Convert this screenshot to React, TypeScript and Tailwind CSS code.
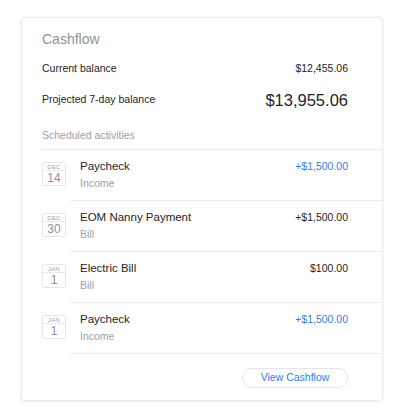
import React from 'react';

type Activity = {
  month: string;
  day: string;
  title: string;
  kind: string;
  amount: string;
  credit: boolean;
};

const activities: Activity[] = [
  { month: 'DEC', day: '14', title: 'Paycheck', kind: 'Income', amount: '+$1,500.00', credit: true },
  { month: 'DEC', day: '30', title: 'EOM Nanny Payment', kind: 'Bill', amount: '+$1,500.00', credit: false },
  { month: 'JAN', day: '1', title: 'Electric Bill', kind: 'Bill', amount: '$100.00', credit: false },
  { month: 'JAN', day: '1', title: 'Paycheck', kind: 'Income', amount: '+$1,500.00', credit: true },
];

function DateBadge({ month, day }: { month: string; day: string }) {
  return (
    <div className="mt-[3px] flex h-[24px] w-[24px] flex-col rounded-[2px] border border-[#e4e6e8] bg-white">
      <div className="flex h-[8px] items-center justify-center border-b border-[#e8eaec] text-[6px] leading-none tracking-[0.2px] text-[#9ea3a8]">
        {month}
      </div>
      <div className="flex flex-1 items-center justify-center text-[12px] leading-none text-[#8b9197]">{day}</div>
    </div>
  );
}

function ActivityRow({ item }: { item: Activity }) {
  return (
    <div className="flex">
      <div className="w-[28px] shrink-0 pt-[9px]">
        <DateBadge month={item.month} day={item.day} />
      </div>
      <div className="flex h-[51px] flex-1 justify-between border-b border-[#ececec] pl-[10px] pr-[34px] pt-[9px]">
        <div className="flex flex-col">
          <span className="h-[14px] text-[11.5px] leading-[14px] text-[#1f2326]">{item.title}</span>
          <span className="mt-[3px] h-[14px] text-[10.5px] leading-[14px] text-[#9aa1a8]">{item.kind}</span>
        </div>
        <span
          className={`h-[14px] text-[10.5px] leading-[14px] ${item.credit ? 'text-[#2a7ff0]' : 'text-[#1f2326]'}`}
        >
          {item.amount}
        </span>
      </div>
    </div>
  );
}

export default function App() {
  return (
    <div
      className="h-[416px] w-[404px] bg-white pl-[21px] pt-[17px]"
      style={{ fontFamily: '"Liberation Sans", Arial, sans-serif' }}
    >
      <div className="flex h-[384px] w-[362px] flex-col rounded-[4px] border border-[#e9eaeb] bg-white pl-[20px] shadow-[0_1px_4px_rgba(0,0,0,0.06)]">
        <div className="mt-[12px] h-[18px] text-[14px] leading-[18px] text-[#8c949c]">Cashflow</div>

        <div className="mt-[12px] flex h-[18px] items-center justify-between pr-[34px] text-[10.5px] text-[#1f2326]">
          <span>Current balance</span>
          <span>$12,455.06</span>
        </div>

        <div className="mt-[11px] flex h-[22px] items-center justify-between pr-[34px] text-[#1f2326]">
          <span className="text-[10.5px]">Projected 7-day balance</span>
          <span className="text-[16.5px]">$13,955.06</span>
        </div>

        <div className="mt-[16px] h-[16px] text-[10.5px] leading-[16px] text-[#9aa1a8]">Scheduled activities</div>

        <div className="mt-[6px] border-t border-[#ececec]">
          {activities.map((item, i) => (
            <ActivityRow key={i} item={item} />
          ))}
        </div>

        <div className="mt-[14px] flex justify-end pr-[34px]">
          <button className="h-[20px] w-[106px] rounded-full border border-[#e3e5e8] bg-white text-[10.5px] text-[#2a7ff0]">
            View Cashflow
          </button>
        </div>
      </div>
    </div>
  );
}
